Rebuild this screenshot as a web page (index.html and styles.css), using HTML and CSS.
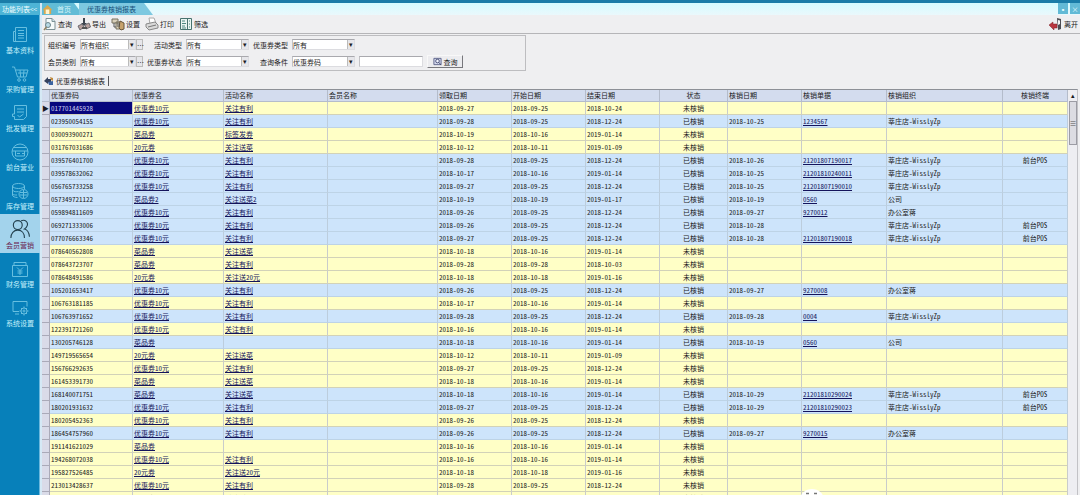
FILE: index.html
```html
<!DOCTYPE html>
<html lang="zh-CN">
<head>
<meta charset="utf-8">
<title>优惠券核销报表</title>
<link rel="stylesheet" href="styles.css">
</head>
<body>
<div class="titlebar"></div>
<div class="app">
  <nav class="sidebar">
    <div class="sidebar-head">功能列表&lt;&lt;</div>
    <a class="nav-item" href="#"><svg viewBox="0 0 18 18"><path d="M4.500 1.500h11v14h-13v-10h2zM4.500 5.500v10M7 4.500h6M7 7.500h6M7 9.500h6M7 12h6"/></svg>基本资料</a>
    <a class="nav-item" href="#"><svg viewBox="0 0 18 18"><path d="M1 2h2.500l3 10h8.500l2-7H4.500M7 8h9M9 5l.7 7M13 5l-.6 7"/><circle cx="8" cy="15" r="1.300"/><circle cx="13.500" cy="15" r="1.300"/></svg>采购管理</a>
    <a class="nav-item" href="#"><svg viewBox="0 0 18 18"><path d="M3.500 1.500h12v11l-3 3h-9v-3h-2V10h2zM6 5h7M6 8h7M6.500 11l2 2 4-3"/></svg>批发管理</a>
    <a class="nav-item" href="#"><svg viewBox="0 0 18 18"><circle cx="9" cy="9" r="8"/><path d="M1 8h16M3 4.500h12M4.500 8v5h9V8M6 10.500h3M11 10.500h2"/></svg>前台营业</a>
    <a class="nav-item" href="#"><svg viewBox="0 0 18 18"><ellipse cx="7.500" cy="4" rx="6" ry="2.500"/><path d="M1.500 4v9c0 1.500 2.500 2.500 5 2.500M13.500 4v3M1.500 8c1 2 4 2 6 1.500M1.500 11.500c1 1.500 3 1.700 4.500 1.500"/><circle cx="12.500" cy="12" r="4.500"/><path d="M9 10.500h7M9 13h7M12.500 8v8"/></svg>库存管理</a>
    <a class="nav-item active" href="#"><svg viewBox="0 0 18 18"><circle cx="7" cy="5.500" r="4"/><path d="M.8 17c0-4 2.500-7 6.200-7s6 3 6 7M10 1.500c4-1.500 6.500 1.500 5.500 4.500-.5 1.500-1.500 2.500-2.500 3 2.800.7 4.200 3.500 4.500 7"/></svg>会员营销</a>
    <a class="nav-item" href="#"><svg viewBox="0 0 18 18"><path d="M1.500 5.500h15v11h-15zM3 5.500v-3h12v3M6 7.500l3 3 3-3M9 10.500V15M6.500 11h5M6.500 13h5"/></svg>财务管理</a>
    <a class="nav-item" href="#"><svg viewBox="0 0 18 18"><path d="M8 12.500H2v-10h14v5M4 15h4"/><circle cx="13" cy="12" r="3"/><circle cx="13" cy="12" r="1"/><path d="M13 7.500V9M13 15v1.500M8.500 12H10M16 12h1.500M10 9l1 1M15 14l1 1M16 9l-1 1M11 14l-1 1"/></svg>系统设置</a>
  </nav>

  <main class="workspace">
    <div class="tabstrip">
      <a class="tab home" href="#"><svg class="home-icon" viewBox="0 0 10 10"><path fill="#d9a84e" d="M0 5l5-5 5 5-1 1v4H1V6z"/><path fill="#fff4cf" d="M3 5h4v5H3z"/></svg>首页</a>
      <a class="tab report" href="#">优惠券核销报表</a>
      <div class="window-buttons">
        <button type="button" aria-label="最小化">▪</button>
        <button type="button" aria-label="关闭">×</button>
      </div>
    </div>

    <div class="toolbar">
      <button type="button"><svg viewBox="0 0 14 14"><path fill="#f5fafa" stroke="#7c9196" d="M3 1.500h6l3 3v8H3z"/><path fill="#cfe3e8" stroke="#7c9196" d="M9 1.500v3h3"/><circle cx="5" cy="8" r="2.500" fill="#b9dbe5" stroke="#6d858c"/><path stroke="#8f8161" stroke-width="1.500" d="M3.500 10L1 13"/></svg>查询</button>
      <button type="button"><svg viewBox="0 0 14 14"><path fill="#3e4650" d="M6 1h2v5h2L7 9 4 6h2z"/><path fill="#b8a19e" stroke="#6c6a70" d="M1 9l4-2 2 3-4 3zM8 8l4-2 1.500 4L9 12z"/><path fill="#555" d="M5 10h5v2H5z"/></svg>导出</button>
      <button type="button"><svg viewBox="0 0 14 14"><path fill="#d8cfb9" stroke="#77705f" d="M1 2h6v4H1zM5 5h6v7H5z"/><path fill="#c7a26c" stroke="#69573b" d="M9 4l4 2v6l-3 1-2-2z"/><path stroke="#555" d="M6 7h3M6 9h3M3 6v4h2"/></svg>设置</button>
      <button type="button"><svg viewBox="0 0 14 14"><path fill="#fff" stroke="#aaa" d="M4 1h5l2 5-6 1z"/><path fill="#d9d9d9" stroke="#888" d="M1 7l9-2 3 3v3l-9 2-3-3z"/><path stroke="#777" d="M3 10l8-2"/></svg>打印</button>
      <button type="button"><svg viewBox="0 0 14 14"><path fill="#e9f5f1" stroke="#47736f" d="M1.500 1.500h11v11h-11zM8.500 1.500v11"/><path stroke="#4d8780" d="M3 4h3M3 6.500h4M3 9h3M3 11h4M10 4h1M10 7h1M10 10h1"/></svg>筛选</button>
      <button type="button" class="leave"><svg viewBox="0 0 14 14"><path fill="#4c4c52" d="M8 1l4 1v10l-3 1z"/><path fill="#f4f4f4" d="M9 3l2 .5V7L9 8z"/><path fill="#b9363f" stroke="#7c2229" stroke-width=".5" d="M0 8l4-3v2h4v4H5v2z"/></svg>离开</button>
    </div>

    <form class="filters">
      <label for="org">组织编号</label>
      <div class="org-field"><span class="pick"><select id="org"><option>所有组织</option></select></span><button type="button" class="more" aria-label="选择组织">…</button></div>
      <label for="act">活动类型</label>
      <span class="pick"><select id="act"><option>所有</option></select></span>
      <label for="ctype">优惠券类型</label>
      <span class="pick"><select id="ctype"><option>所有</option></select></span>

      <label class="line-start" for="member">会员类别</label>
      <div class="org-field"><span class="pick"><select id="member"><option>所有</option></select></span><button type="button" class="more" aria-label="选择会员类别">…</button></div>
      <label for="state">优惠券状态</label>
      <span class="pick"><select id="state"><option>所有</option></select></span>
      <label for="cond">查询条件</label>
      <span class="pick"><select id="cond"><option>优惠券码</option></select></span>
      <input type="text" class="keyword" aria-label="查询内容">
      <button type="button" class="search"><svg viewBox="0 0 10 10"><path fill="#d4d9ee" stroke="#596087" d="M1 1.500h8v7H1z"/><circle cx="5" cy="4.500" r="2" fill="#f4f6ff" stroke="#41476f"/><path stroke="#41476f" d="M6.500 6l2.500 3"/></svg>查询</button>
    </form>

    <h1 class="sheet-tab"><svg viewBox="0 0 10 10"><path fill="#34425e" d="M0 5l4-4v2h3v3H4v2z"/><path fill="#c08b3f" d="M6 1l3 1v3L7 4z"/><path fill="#3b63a0" d="M4 6l5-1v4H5z"/></svg><span>优惠券核销报表</span></h1>

    <div class="grid-wrap">
      <table class="grid">
        <colgroup>
          <col class="c-mark"><col class="c-code"><col class="c-name"><col class="c-act"><col class="c-member">
          <col class="c-date"><col class="c-date"><col class="c-date"><col class="c-state"><col class="c-date">
          <col class="c-doc"><col class="c-org"><col class="c-term">
        </colgroup>
        <thead>
          <tr><th></th><th>优惠券码</th><th>优惠券名</th><th>活动名称</th><th>会员名称</th><th>领取日期</th><th>开始日期</th><th>结束日期</th><th class="mid">状态</th><th>核销日期</th><th>核销单据</th><th>核销组织</th><th class="mid">核销终端</th></tr>
        </thead>
        <tbody id="rows"></tbody>
      </table>
      <div class="scrollbar" aria-hidden="true"><span class="up">▴</span><span class="thumb">≡</span></div>
      <svg class="badge" viewBox="0 0 26 16" aria-hidden="true"><ellipse cx="13" cy="12" rx="12" ry="11" fill="#fff"/><path stroke="#777" stroke-width="1.500" d="M7 5.500h3M15 5.500h3"/></svg>
    </div>
  </main>
</div>
<script src="rows.js"></script>
</body>
</html>
```
FILE: styles.css
```css
* { box-sizing: border-box; }

body {
  margin: 0;
  height: 100vh;
  display: flex;
  flex-direction: column;
  overflow: hidden;
  background: #efeff1;
  color: #1b1b22;
  font: 7px/10px "Noto Sans Mono CJK SC", "Liberation Serif", "Noto Sans CJK SC", sans-serif;
}

button, input, select {
  font: inherit;
  color: inherit;
  margin: 0;
  padding: 0;
  border: 0;
  border-radius: 0;
  background: none;
}

svg { fill: none; flex: none; }
a { color: inherit; }

.titlebar { height: 3px; flex: none; background: #1a7ca8; }
.app { flex: 1; display: flex; min-height: 0; }

/* Left navigation */
.sidebar {
  width: 42px;
  flex: none;
  background: #0780ba;
  border-right: 2px solid #d5e9f5;
  box-shadow: inset -1px 0 #6bb7dc;
}
.sidebar-head {
  height: 12px;
  margin-bottom: 4px;
  padding-left: 2px;
  line-height: 13px;
  color: #f2ffff;
  background: #4db4d6;
  white-space: nowrap;
}
.nav-item {
  height: 39px;
  padding-bottom: 3px;
  display: flex;
  flex-direction: column;
  align-items: center;
  justify-content: flex-end;
  gap: 1px;
  color: #c4f0fa;
  text-decoration: none;
}
.nav-item svg { width: 18px; height: 18px; stroke: #67bfe0; }
.nav-item.active { background: #a3d3ec; color: #6b2350; }
.nav-item.active svg { width: 20px; height: 20px; stroke: #24414f; }

.workspace { flex: 1; min-width: 0; display: flex; flex-direction: column; }

/* Document tabs */
.tabstrip {
  height: 12px;
  flex: none;
  display: flex;
  background: linear-gradient(#d4fbff, #eaf8fc);
}
.tab {
  height: 12px;
  line-height: 13px;
  text-decoration: none;
  clip-path: polygon(0 0, calc(100% - 9px) 0, 100% 100%, 0 100%);
}
.home { width: 41px; display: flex; gap: 5px; padding-left: 1px; background: #62bcd6; color: #d6f5fa; }
.home-icon { width: 9px; height: 9px; margin-top: 2px; }
.report { width: 74px; padding-left: 8px; margin-left: -4px; background: #7dc8e0; color: #17507a; }
.window-buttons { margin-left: auto; display: flex; gap: 2px; }
.window-buttons button { width: 10px; height: 11px; line-height: 10px; color: #eaffff; background: #62bad6; }

/* Toolbar */
.toolbar {
  height: 19px;
  flex: none;
  display: flex;
  align-items: center;
  gap: 5px;
  padding: 0 2px 0 1px;
  border-bottom: 1px solid #b5b5b8;
}
.toolbar button { display: flex; align-items: center; gap: 1px; }
.toolbar svg { width: 14px; height: 14px; }
.toolbar .leave { margin-left: auto; }

/* Filter panel */
.filters {
  width: 482px;
  flex: none;
  margin: 1px 0 0 2px;
  padding: 2px 3px;
  display: grid;
  grid-template-columns: 28px 63px 35px 63px 35px 63px 64px 36px;
  grid-auto-rows: 13px;
  gap: 4px;
  align-items: center;
  border: 1px solid #bdbdc0;
}
.filters label { text-align: right; white-space: nowrap; }
.line-start { grid-column: 1; }
.pick { position: relative; display: flex; flex: 1; }
.pick select, .keyword {
  width: 100%;
  height: 11px;
  appearance: none;
  background: #fff;
  border: 1px solid #dcdce0;
  border-top-color: #a9a9ae;
  border-left-color: #c2c2c6;
}
.pick::after {
  content: "▾";
  position: absolute;
  top: 1px;
  right: 1px;
  width: 6px;
  height: 9px;
  line-height: 9px;
  text-align: center;
  background: #e6e6ea;
  border-left: 1px solid #bbb;
  pointer-events: none;
}
.org-field { display: flex; }
.more { width: 7px; height: 11px; line-height: 6px; background: #e6e6ea; border: 1px solid #bbb; }
.search {
  height: 13px;
  display: flex;
  align-items: center;
  justify-content: center;
  gap: 2px;
  background: #ececef;
  border: 1px solid #f8f8f8;
  border-right-color: #77777c;
  border-bottom-color: #77777c;
}
.search svg { width: 9px; height: 9px; }

/* Sheet caption */
.sheet-tab {
  margin: 4px 0 2px 2px;
  height: 12px;
  flex: none;
  display: flex;
  align-items: center;
  gap: 2px;
  font: inherit;
}
.sheet-tab svg { width: 10px; height: 10px; }
.sheet-tab span { padding-right: 3px; border-right: 1px solid #55555a; }

/* Data grid */
.grid-wrap {
  flex: 1;
  min-height: 0;
  display: flex;
  position: relative;
  overflow: hidden;
  margin-right: 2px;
  border-top: 1px solid #8d9097;
  border-right: 1px solid #c2c2c6;
}
.grid {
  flex: 1;
  min-width: 0;
  width: 100%;
  align-self: flex-start;
  table-layout: fixed;
  border-collapse: separate;
  border-spacing: 0;
}
.c-mark { width: 8px; }
.c-code { width: 83px; }
.c-name { width: 91px; }
.c-act { width: 104px; }
.c-member { width: 110px; }
.c-date { width: 74px; }
.c-state { width: 68px; }
.c-doc { width: 85px; }
.c-org { width: 116px; }

.grid th, .grid td {
  height: 13px;
  padding: 0 1px;
  line-height: 12px;
  text-align: left;
  font-weight: normal;
  white-space: nowrap;
  overflow: hidden;
  border-right: 1px solid #c9cccb;
  border-bottom: 1px solid #d2d2b8;
}
.grid th { height: 12px; line-height: 11px; background: #d3dcee; border-color: #b4bccb; }
.grid td { background: #ffffc6; }
.grid .used td { background: #cde4fb; border-bottom-color: #bdd3e6; border-right-color: #bccddd; }
.grid tbody td:first-child { background: #dadbe8; border-color: #aaaab8; padding: 0; }
.grid .mid { text-align: center; }
.grid td a { color: #14145c; }
.grid td.selected { background: #07077d; color: #c7c7ee; }

.scrollbar {
  width: 9px;
  flex: none;
  display: flex;
  flex-direction: column;
  align-items: center;
  background: #eeeef2;
}
.up { height: 11px; }
.thumb {
  width: 8px;
  height: 44px;
  line-height: 42px;
  text-align: center;
  color: #555;
  background: #dcdce2;
  border: 1px solid #9c9ca4;
}
.badge { position: absolute; left: 757px; bottom: -9px; width: 26px; height: 16px; }
```
FILE: rows.js
```js
const C10 = "优惠券10元", DISH = "菜品券", Y20 = "20元券";
const LIKE = "关注有利", SEND = "关注送菜", SEND20 = "关注送20元";
const STORE = "莘庄店-WisslyZp", OFFICE = "办公室蒋", POS = "前台POS";

// code, coupon, activity, received, start, end, then for used coupons: date, document, organisation, terminal
const data = [
  ["017701445928", C10, LIKE, "2018-09-27", "2018-09-25", "2018-10-24"],
  ["023950054155", C10, LIKE, "2018-09-28", "2018-09-25", "2018-12-24", "2018-10-25", "1234567", STORE],
  ["030093900271", DISH, "标签发券", "2018-10-19", "2018-10-16", "2019-01-14"],
  ["031767031686", Y20, SEND, "2018-10-12", "2018-10-11", "2019-01-09"],
  ["039576401700", C10, LIKE, "2018-09-28", "2018-09-25", "2018-12-24", "2018-10-26", "21201807190017", STORE, POS],
  ["039578632062", C10, LIKE, "2018-10-17", "2018-10-16", "2019-01-14", "2018-10-25", "21201810240011", STORE],
  ["056765733258", C10, LIKE, "2018-09-27", "2018-09-25", "2018-12-24", "2018-10-25", "21201807190010", STORE],
  ["057349721122", "菜品券2", "关注送菜2", "2018-10-19", "2018-10-19", "2019-01-17", "2018-10-19", "0560", "公司"],
  ["059894811609", C10, LIKE, "2018-09-26", "2018-09-25", "2018-12-24", "2018-09-27", "9270012", OFFICE],
  ["069271333006", C10, LIKE, "2018-09-26", "2018-09-25", "2018-12-24", "2018-10-28", "", STORE, POS],
  ["077076663346", C10, LIKE, "2018-09-27", "2018-09-25", "2018-12-24", "2018-10-28", "21201807190018", STORE, POS],
  ["078640562808", DISH, SEND, "2018-10-18", "2018-10-16", "2019-01-14"],
  ["078643723707", DISH, LIKE, "2018-09-28", "2018-09-28", "2018-10-03"],
  ["078648491586", Y20, SEND20, "2018-10-18", "2018-10-18", "2019-01-16"],
  ["105201653417", C10, LIKE, "2018-09-26", "2018-09-25", "2018-12-24", "2018-09-27", "9270008", OFFICE],
  ["106763181185", C10, LIKE, "2018-10-17", "2018-10-16", "2019-01-14"],
  ["106763971652", C10, LIKE, "2018-09-28", "2018-09-25", "2018-12-24", "2018-09-28", "0004", STORE],
  ["122391721260", C10, LIKE, "2018-10-16", "2018-10-16", "2019-01-14"],
  ["130205746128", DISH, "", "2018-10-18", "2018-10-16", "2019-01-14", "2018-10-19", "0560", "公司"],
  ["149719565654", Y20, SEND, "2018-10-12", "2018-10-11", "2019-01-09"],
  ["156766292635", C10, LIKE, "2018-09-27", "2018-09-25", "2018-12-24"],
  ["161453391730", DISH, SEND, "2018-10-18", "2018-10-16", "2019-01-14"],
  ["168140071751", DISH, SEND, "2018-10-18", "2018-10-16", "2019-01-14", "2018-10-29", "21201810290024", STORE, POS],
  ["180201931632", C10, LIKE, "2018-09-27", "2018-09-25", "2018-12-24", "2018-10-29", "21201810290023", STORE, POS],
  ["180205452363", C10, LIKE, "2018-09-26", "2018-09-25", "2018-12-24"],
  ["186454757960", C10, LIKE, "2018-09-26", "2018-09-25", "2018-12-24", "2018-09-27", "9270015", OFFICE],
  ["191141621029", DISH, "", "2018-10-16", "2018-10-16", "2019-01-14"],
  ["194268072038", C10, LIKE, "2018-10-16", "2018-10-16", "2019-01-14"],
  ["195827526485", Y20, SEND20, "2018-10-18", "2018-10-18", "2019-01-16"],
  ["213013428637", C10, LIKE, "2018-09-28", "2018-09-25", "2018-12-24"],
  ["213018115233", DISH, SEND, "2018-10-18", "2018-10-16", "2019-01-14"]
];

const body = document.getElementById("rows");
data.forEach((row, index) => {
  const [code, coupon, activity, got, start, end, usedOn = "", doc = "", org = "", term = ""] = row;
  const tr = body.insertRow();
  if (usedOn) tr.className = "used";
  const cell = (text, className = "") => {
    const td = tr.insertCell();
    td.className = className;
    td.textContent = text;
  };
  const link = (text) => {
    const td = tr.insertCell();
    if (!text) return;
    const a = document.createElement("a");
    a.href = "#";
    a.textContent = text;
    td.append(a);
  };
  cell(index ? "" : "▶");
  cell(code, index ? "" : "selected");
  link(coupon);
  link(activity);
  cell("");
  [got, start, end].forEach((date) => cell(date));
  cell(usedOn ? "已核销" : "未核销", "mid");
  cell(usedOn);
  link(doc);
  cell(org);
  cell(term, "mid");
});
```
